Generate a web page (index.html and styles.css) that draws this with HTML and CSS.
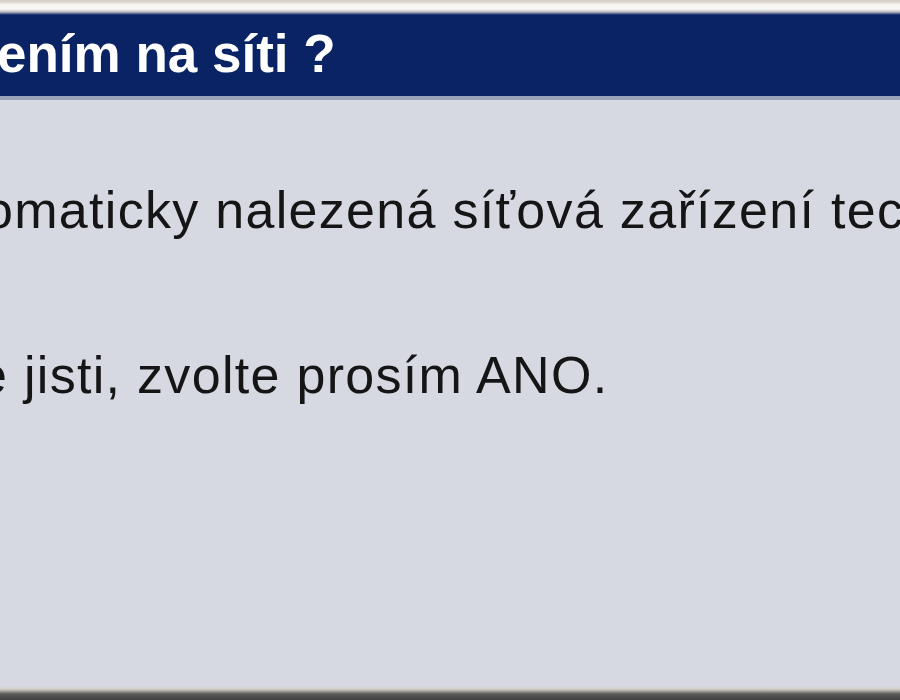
FILE: index.html
```html
<!DOCTYPE html>
<html lang="cs">
<head>
<meta charset="utf-8">
<link rel="stylesheet" href="styles.css">
</head>
<body>
<div class="window">
  <div class="frame-top"></div>
  <div class="titlebar"><span class="title">ením na síti ?</span></div>
  <div class="content">
    <p class="line first">omaticky nalezená síťová zařízení tec</p>
    <p class="line second">e jisti, zvolte prosím ANO.</p>
  </div>
  <div class="frame-bottom"></div>
</div>
</body>
</html>
```
FILE: styles.css
```css
html, body {
  margin: 0;
  padding: 0;
  width: 900px;
  height: 700px;
  overflow: hidden;
}
.window {
  display: flex;
  flex-direction: column;
  height: 700px;
  background: #d6d9e2;
  font-family: "Liberation Sans", Arial, sans-serif;
}
.frame-top {
  height: 15px;
  flex: none;
  background: linear-gradient(#d4d0c8 0px, #d8d4cc 2px, #f4f2ee 4px, #fbfaf8 9px, #b8b8c0 12px, #0a1f66 15px);
}
.titlebar {
  height: 81px;
  flex: none;
  background: #0a2364;
  border-bottom: 4px solid #9aa2bc;
  overflow: hidden;
  white-space: nowrap;
}
.title {
  display: block;
  color: #ffffff;
  font-weight: bold;
  font-size: 53px;
  line-height: 77px;
  margin-left: -3px;
}
.content {
  flex: 1;
  overflow: hidden;
  white-space: nowrap;
  color: #151515;
  font-size: 52px;
  letter-spacing: 1.3px;
}
.line {
  margin: 0;
  line-height: 60px;
}
.first {
  margin-top: 80px;
  margin-left: -16px;
}
.second {
  margin-top: 105px;
  margin-left: -22px;
}
.frame-bottom {
  height: 14px;
  flex: none;
  background: linear-gradient(#d6d9e2 0px, #d4d0c8 3px, #a8a6a0 5px, #5a5a5a 8px, #404040 14px);
}
```
